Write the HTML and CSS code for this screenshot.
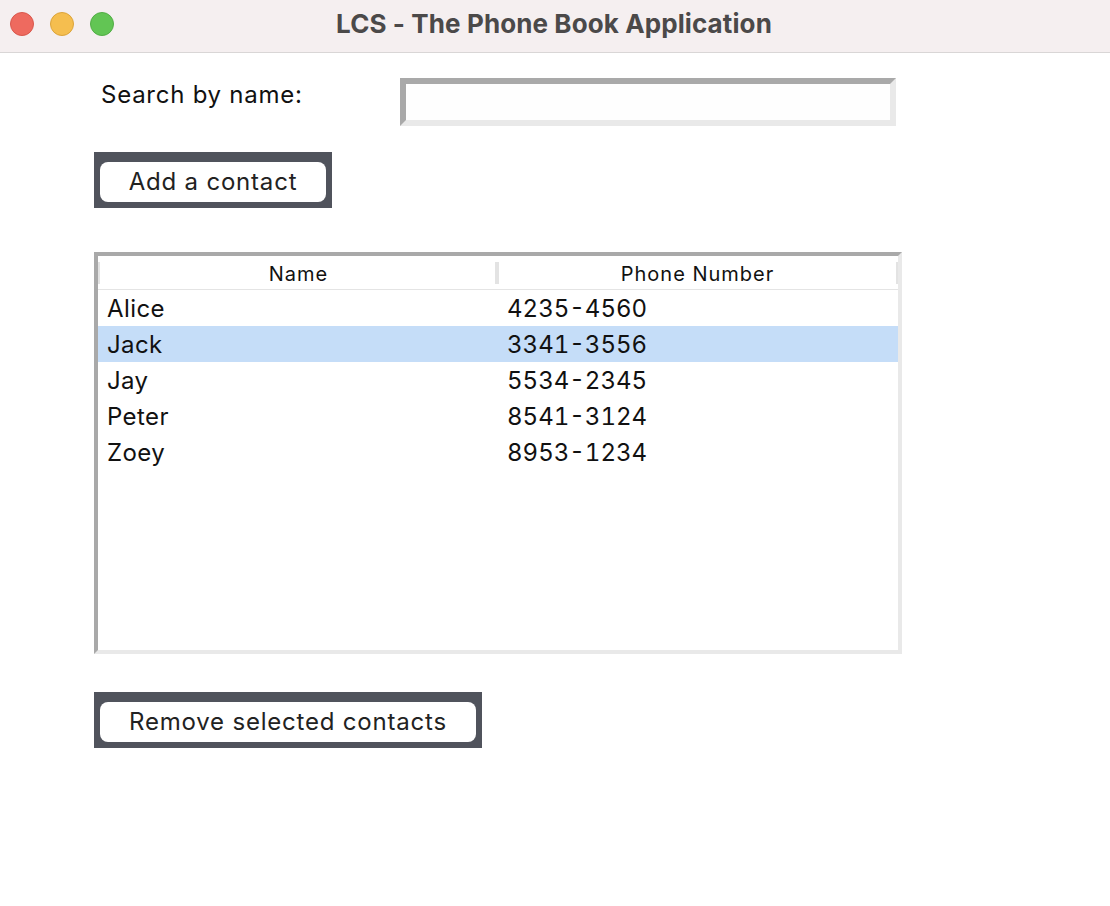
FILE: index.html
```html
<!DOCTYPE html>
<html>
<head>
<meta charset="utf-8">
<title>LCS - The Phone Book Application</title>
<link rel="stylesheet" href="styles.css">
</head>
<body>
<div class="window">
  <header class="titlebar">
    <div class="lights">
      <span class="light red"></span>
      <span class="light yellow"></span>
      <span class="light green"></span>
    </div>
    <div class="title">LCS - The Phone Book Application</div>
  </header>
  <main class="content">
    <div class="search-row">
      <label class="search-label">Search by name:</label>
      <div class="entry"></div>
    </div>
    <div class="btn-frame add-frame">
      <button class="btn">Add a contact</button>
    </div>
    <div class="tree">
      <div class="tree-head">
        <span class="sep"></span>
        <span class="th">Name</span>
        <span class="sep sep-mid"></span>
        <span class="th">Phone Number</span>
        <span class="sep sep-right"></span>
      </div>
      <div class="row"><span class="td">Alice</span><span class="td phone">4235-4560</span></div>
      <div class="row selected"><span class="td">Jack</span><span class="td phone">3341-3556</span></div>
      <div class="row"><span class="td">Jay</span><span class="td phone">5534-2345</span></div>
      <div class="row"><span class="td">Peter</span><span class="td phone">8541-3124</span></div>
      <div class="row"><span class="td">Zoey</span><span class="td phone">8953-1234</span></div>
    </div>
    <div class="btn-frame remove-frame">
      <button class="btn">Remove selected contacts</button>
    </div>
  </main>
</div>
</body>
</html>
```

FILE: styles.css
```css
* { box-sizing: border-box; }
html, body {
  margin: 0;
  padding: 0;
  background: #ffffff;
  font-family: Inter, "Liberation Sans", sans-serif;
}
.window {
  width: 1110px;
  height: 906px;
  background: #ffffff;
}
.titlebar {
  height: 53px;
  background: #f5eff0;
  border-bottom: 1px solid #d9d6d6;
  display: flex;
  align-items: center;
}
.lights {
  display: flex;
  gap: 16px;
  padding-left: 10px;
  margin-top: -4px;
}
.light {
  width: 24px;
  height: 24px;
  border-radius: 50%;
  display: block;
}
.red { background: #ee6a5f; border: 1px solid #d9574c; }
.yellow { background: #f5be4f; border: 1px solid #dca43a; }
.green { background: #62c554; border: 1px solid #52ad45; }
.title {
  flex: 1;
  text-align: center;
  font-weight: 700;
  font-size: 26px;
  letter-spacing: 0.1px;
  color: #4b4949;
  margin-left: -116px;
  margin-top: -6px;
}
.content {
  padding-left: 94px;
  display: flex;
  flex-direction: column;
  align-items: flex-start;
}
.search-row {
  margin-top: 25px;
  display: flex;
  align-items: flex-start;
  height: 48px;
}
.search-label {
  width: 306px;
  padding-left: 7px;
  font-size: 24px;
  letter-spacing: 0.75px;
  color: #111;
  line-height: 34px;
}
.entry {
  width: 496px;
  height: 48px;
  border-style: solid;
  border-width: 6px;
  border-color: #a9a9a9 #e9e9e9 #e9e9e9 #a9a9a9;
  background: #fefefe;
}
.btn-frame {
  background: #50535c;
  padding: 10px 6px 6px 6px;
}
.add-frame { margin-top: 26px; width: 238px; }
.remove-frame { margin-top: 38px; width: 388px; }
.btn {
  display: block;
  width: 100%;
  height: 40px;
  border: none;
  border-radius: 8px;
  background: #ffffff;
  font-family: Inter, "Liberation Sans", sans-serif;
  font-size: 24px;
  letter-spacing: 0.8px;
  color: #222;
  padding: 0;
  line-height: 38px;
}
.tree {
  margin-top: 44px;
  width: 808px;
  height: 402px;
  border-style: solid;
  border-width: 4px;
  border-color: #a9a9a9 #e9e9e9 #e9e9e9 #a9a9a9;
  background: #fff;
}
.tree-head {
  display: flex;
  align-items: center;
  height: 34px;
  border-bottom: 1px solid #e4e4e4;
}
.sep {
  width: 2px;
  height: 22px;
  background: #e3e3e3;
  flex: none;
}
.sep-mid { width: 4px; margin-left: -2px; }
.sep-right { width: 2px; }
.th {
  flex: 1;
  text-align: center;
  font-size: 20px;
  letter-spacing: 1px;
  color: #111;
  padding-top: 3px;
}
.row {
  display: flex;
  height: 36px;
  align-items: center;
}
.row.selected { background: #c5ddf8; }
.td {
  width: 400px;
  padding-left: 9px;
  font-size: 24px;
  letter-spacing: 0.4px;
  color: #111;
}
.td.phone {
  font-feature-settings: "tnum";
  letter-spacing: 0;
}
```
